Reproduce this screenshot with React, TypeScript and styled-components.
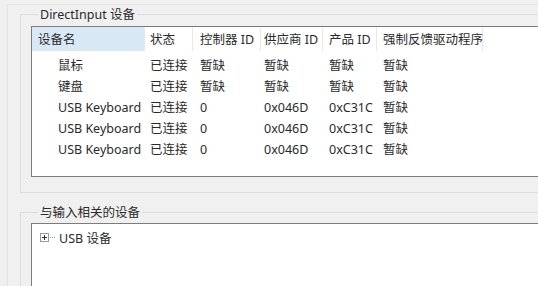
import React from 'react'
import styled, { createGlobalStyle } from 'styled-components'

const GlobalStyle = createGlobalStyle`
  html, body {
    margin: 0;
    background: #f0f0f0;
    overflow: hidden;
  }
  body {
    font-family: 'Noto Sans', 'Noto Sans CJK SC', sans-serif;
    font-size: 12.5px;
    color: #2a2a2a;
  }
`

interface Column {
  title: string
  width: number
  pad: number
}

const columns: Column[] = [
  { title: '设备名', width: 113, pad: 6 },
  { title: '状态', width: 48, pad: 5 },
  { title: '控制器 ID', width: 68, pad: 7 },
  { title: '供应商 ID', width: 62, pad: 3 },
  { title: '产品 ID', width: 54, pad: 6 },
  { title: '强制反馈驱动程序', width: 106, pad: 6 },
]

const rows: string[][] = [
  ['鼠标', '已连接', '暂缺', '暂缺', '暂缺', '暂缺'],
  ['键盘', '已连接', '暂缺', '暂缺', '暂缺', '暂缺'],
  ['USB Keyboard', '已连接', '0', '0x046D', '0xC31C', '暂缺'],
  ['USB Keyboard', '已连接', '0', '0x046D', '0xC31C', '暂缺'],
  ['USB Keyboard', '已连接', '0', '0x046D', '0xC31C', '暂缺'],
]

const gridTemplate = columns.map((c) => `${c.width}px`).join(' ')

const Window = styled.div`
  width: 531px;
  height: 282px;
  overflow: hidden;
  margin: 4px 0 0 7px;
  border-left: 1px solid #e2e2e2;
  border-top: 1px solid #e4e4e4;
  padding: 1px 0 0 12px;
  box-sizing: border-box;
`

const GroupBox = styled.fieldset<{ $gap?: number }>`
  margin: ${(p) => p.$gap ?? 0}px -40px 0 0;
  padding: 0 0 15px 10px;
  border: 1px solid #dcdcdc;
  min-width: 0;
`

const Legend = styled.legend`
  margin-left: 7px;
  padding: 0 2px;
  line-height: 17px;
`

const ListBox = styled.div<{ $height: number; $top: number }>`
  margin-top: ${(p) => p.$top}px;
  height: ${(p) => p.$height}px;
  background: #fff;
  border: 1px solid #7c7c7c;
  box-sizing: border-box;
`

const HeaderRow = styled.div`
  display: grid;
  grid-template-columns: ${gridTemplate};
  height: 24px;
`

const HeaderCell = styled.div<{ $pad: number; $active?: boolean }>`
  padding: 2px 0 0 ${(p) => p.$pad}px;
  line-height: 22px;
  white-space: nowrap;
  background: ${(p) => (p.$active ? '#d9e8f5' : '#fff')};
  border-right: 1px solid #e8e8e8;
`

const Body = styled.div`
  padding-top: 4px;
`

const Row = styled.div`
  display: grid;
  grid-template-columns: ${gridTemplate};
  height: 21px;
  line-height: 21px;
`

const Cell = styled.div<{ $pad: number }>`
  padding-left: ${(p) => p.$pad}px;
  white-space: nowrap;
  overflow: hidden;
`

const TreeItem = styled.div`
  display: flex;
  align-items: center;
  height: 18px;
  margin-top: 4px;
  padding-left: 8px;
  gap: 3px;
`

const Expander = styled.svg`
  width: 16px;
  height: 9px;
  flex: none;
`

function PlusBox() {
  return (
    <Expander viewBox='0 0 16 9'>
      <rect x='0.5' y='0.5' width='8' height='8' fill='#fff' stroke='#9a9a9a' />
      <path d='M2 4.5h5M4.5 2v5' stroke='#333' />
      <path d='M10 4.5h1M12 4.5h1M14 4.5h1' stroke='#a0a0a0' />
    </Expander>
  )
}

export default function App() {
  return (
    <>
      <GlobalStyle />
      <Window>
        <GroupBox>
          <Legend>DirectInput 设备</Legend>
          <ListBox $top={3} $height={151}>
            <HeaderRow>
              {columns.map((c, i) => (
                <HeaderCell key={c.title} $pad={c.pad} $active={i === 0}>
                  {c.title}
                </HeaderCell>
              ))}
            </HeaderRow>
            <Body>
              {rows.map((r, ri) => (
                <Row key={ri}>
                  {r.map((v, ci) => (
                    <Cell key={ci} $pad={ci === 0 ? 26 : columns[ci].pad}>
                      {v}
                    </Cell>
                  ))}
                </Row>
              ))}
            </Body>
          </ListBox>
        </GroupBox>
        <GroupBox $gap={11}>
          <Legend>与输入相关的设备</Legend>
          <ListBox $top={2} $height={120}>
            <TreeItem>
              <PlusBox />
              <span>USB 设备</span>
            </TreeItem>
          </ListBox>
        </GroupBox>
      </Window>
    </>
  )
}
